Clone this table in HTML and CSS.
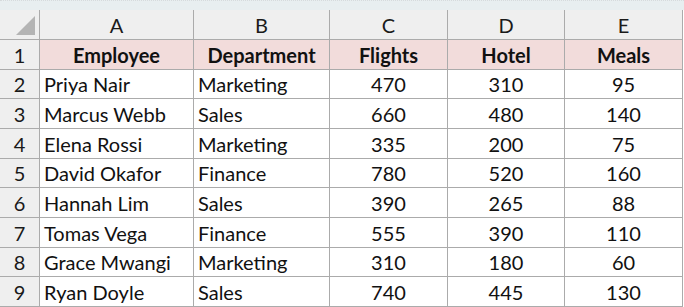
FILE: index.html
```html
<!DOCTYPE html>
<html>
<head>
<meta charset="utf-8">
<link rel="stylesheet" href="styles.css">
</head>
<body>
<div class="strip"></div>
<div class="sheet">
  <div class="corner"><span class="tri"></span></div>
  <div class="colhead">A</div>
  <div class="colhead">B</div>
  <div class="colhead">C</div>
  <div class="colhead">D</div>
  <div class="colhead">E</div>

  <div class="rowhead">1</div>
  <div class="cell th">Employee</div>
  <div class="cell th">Department</div>
  <div class="cell th">Flights</div>
  <div class="cell th">Hotel</div>
  <div class="cell th">Meals</div>

  <div class="rowhead">2</div>
  <div class="cell txt">Priya Nair</div>
  <div class="cell txt">Marketing</div>
  <div class="cell num">470</div>
  <div class="cell num">310</div>
  <div class="cell num">95</div>

  <div class="rowhead">3</div>
  <div class="cell txt">Marcus Webb</div>
  <div class="cell txt">Sales</div>
  <div class="cell num">660</div>
  <div class="cell num">480</div>
  <div class="cell num">140</div>

  <div class="rowhead">4</div>
  <div class="cell txt">Elena Rossi</div>
  <div class="cell txt">Marketing</div>
  <div class="cell num">335</div>
  <div class="cell num">200</div>
  <div class="cell num">75</div>

  <div class="rowhead">5</div>
  <div class="cell txt">David Okafor</div>
  <div class="cell txt">Finance</div>
  <div class="cell num">780</div>
  <div class="cell num">520</div>
  <div class="cell num">160</div>

  <div class="rowhead">6</div>
  <div class="cell txt">Hannah Lim</div>
  <div class="cell txt">Sales</div>
  <div class="cell num">390</div>
  <div class="cell num">265</div>
  <div class="cell num">88</div>

  <div class="rowhead">7</div>
  <div class="cell txt">Tomas Vega</div>
  <div class="cell txt">Finance</div>
  <div class="cell num">555</div>
  <div class="cell num">390</div>
  <div class="cell num">110</div>

  <div class="rowhead">8</div>
  <div class="cell txt">Grace Mwangi</div>
  <div class="cell txt">Marketing</div>
  <div class="cell num">310</div>
  <div class="cell num">180</div>
  <div class="cell num">60</div>

  <div class="rowhead">9</div>
  <div class="cell txt">Ryan Doyle</div>
  <div class="cell txt">Sales</div>
  <div class="cell num">740</div>
  <div class="cell num">445</div>
  <div class="cell num">130</div>
</div>
</body>
</html>
```

FILE: styles.css
```css
html, body {
  margin: 0;
  padding: 0;
  background: #ffffff;
}
body {
  font-family: Lato, "Noto Sans", sans-serif;
  color: #111;
  width: 684px;
  height: 307px;
  overflow: hidden;
}
.strip {
  height: 10px;
  background: #e8eef0;
  border-top: 1px dotted #d6dadc;
  box-sizing: border-box;
}
.sheet {
  display: grid;
  width: 683px;
  box-sizing: border-box;
  grid-template-columns: 39px 153px 135px 117px 116px 117px;
  grid-template-rows: 29px 29px 28px 29px 29px 28px 29px 29px 28px 29px;
  column-gap: 1px;
  row-gap: 1px;
  background: #ababab;
  padding-right: 1px;
  padding-bottom: 1px;
}
.corner {
  background: #efefef;
  position: relative;
}
.tri {
  position: absolute;
  left: 16px;
  top: 6px;
  width: 0;
  height: 0;
  border-left: 19px solid transparent;
  border-bottom: 19px solid #b4b4b4;
}
.colhead {
  background: #efefef;
  display: flex;
  align-items: center;
  justify-content: center;
  font-size: 20px;
  color: #1a1a1a;
  box-shadow: inset 0 0 0 0 transparent;
}
.rowhead {
  background: #efefef;
  display: flex;
  align-items: center;
  justify-content: center;
  font-size: 20px;
  color: #1a1a1a;
}
.cell {
  background: #ffffff;
  display: flex;
  align-items: center;
  font-size: 20px;
  white-space: nowrap;
  overflow: hidden;
}
.th {
  background: #f2dcdb;
  font-weight: bold;
  justify-content: center;
}
.txt {
  padding-left: 4px;
}
.num {
  justify-content: center;
}
```
